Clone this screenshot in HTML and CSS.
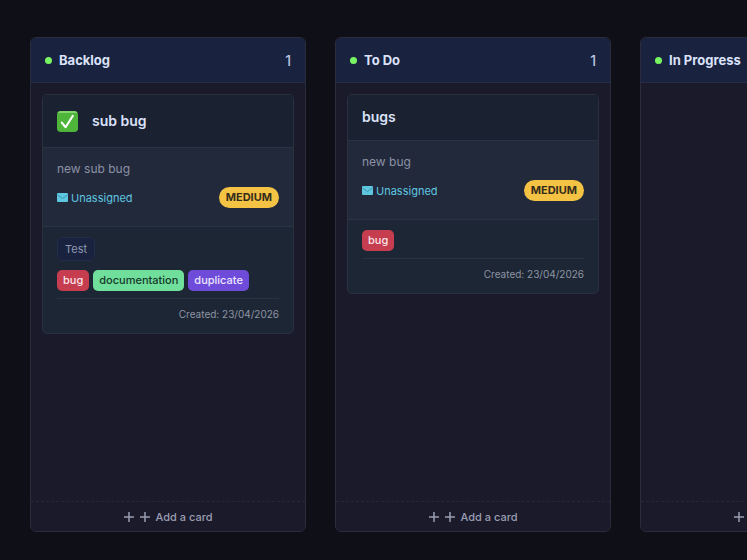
FILE: index.html
```html
<!DOCTYPE html>
<html lang="en">
<head>
    <meta charset="UTF-8">
    <meta name="viewport" content="width=device-width, initial-scale=1.0">
    <title>Board</title>
    <link rel="stylesheet" href="styles.css">
</head>
<body>
    <svg class="sprite" aria-hidden="true">
        <symbol id="icon-mail" viewBox="0 0 22 18">
            <rect width="22" height="18" rx="2" fill="currentColor"/>
            <path d="M1 4l10 7 10-7" fill="none" stroke="#3a93ab" stroke-width="1.8"/>
        </symbol>
        <symbol id="icon-plus" viewBox="0 0 10 10">
            <path d="M5 0v10M0 5h10" fill="none" stroke="currentColor" stroke-width="1.5"/>
        </symbol>
    </svg>
    <main class="board">
        <section class="column">
            <header class="column-header">
                <span class="dot"></span>
                <h2>Backlog</h2>
                <span class="count">1</span>
            </header>
            <div class="column-body">
                <article class="card">
                    <div class="card-header">
                        <svg class="check" viewBox="0 0 22 22" role="img" aria-label="Done">
                            <rect width="22" height="22" rx="4" fill="#4fb53a"/>
                            <path d="M4 0h14a4 4 0 0 1 3.5 2H.5a4 4 0 0 1 3.5-2z" fill="#82d56c"/>
                            <path d="M5 12.2L9 17L16.6 5" fill="none" stroke="#fff" stroke-width="2.2" stroke-linecap="round" stroke-linejoin="round"/>
                        </svg>
                        <h3>sub bug</h3>
                    </div>
                    <div class="card-body">
                        <p>new sub bug</p>
                        <div class="card-meta">
                            <a class="assignee" href="#"><svg class="mail" aria-hidden="true"><use href="#icon-mail"/></svg>Unassigned</a>
                            <span class="priority">MEDIUM</span>
                        </div>
                    </div>
                    <div class="card-footer">
                        <div class="tags">
                            <span class="tag">Test</span>
                        </div>
                        <div class="labels">
                            <span class="label bug">bug</span>
                            <span class="label documentation">documentation</span>
                            <span class="label duplicate">duplicate</span>
                        </div>
                        <p class="created">Created: 23/04/2026</p>
                    </div>
                </article>
            </div>
            <button class="add-card" type="button">
                <svg class="plus" aria-hidden="true"><use href="#icon-plus"/></svg>
                <svg class="plus" aria-hidden="true"><use href="#icon-plus"/></svg>
                Add a card
            </button>
        </section>

        <section class="column">
            <header class="column-header">
                <span class="dot"></span>
                <h2>To Do</h2>
                <span class="count">1</span>
            </header>
            <div class="column-body">
                <article class="card">
                    <div class="card-header">
                        <h3>bugs</h3>
                    </div>
                    <div class="card-body">
                        <p>new bug</p>
                        <div class="card-meta">
                            <a class="assignee" href="#"><svg class="mail" aria-hidden="true"><use href="#icon-mail"/></svg>Unassigned</a>
                            <span class="priority">MEDIUM</span>
                        </div>
                    </div>
                    <div class="card-footer">
                        <div class="labels">
                            <span class="label bug">bug</span>
                        </div>
                        <p class="created">Created: 23/04/2026</p>
                    </div>
                </article>
            </div>
            <button class="add-card" type="button">
                <svg class="plus" aria-hidden="true"><use href="#icon-plus"/></svg>
                <svg class="plus" aria-hidden="true"><use href="#icon-plus"/></svg>
                Add a card
            </button>
        </section>

        <section class="column">
            <header class="column-header">
                <span class="dot"></span>
                <h2>In Progress</h2>
            </header>
            <div class="column-body"></div>
            <button class="add-card" type="button">
                <svg class="plus" aria-hidden="true"><use href="#icon-plus"/></svg>
                <svg class="plus" aria-hidden="true"><use href="#icon-plus"/></svg>
                Add a card
            </button>
        </section>
    </main>
</body>
</html>
```
FILE: styles.css
```css
* {
    box-sizing: border-box;
}
body {
    margin: 0;
    background-color: #0f0f18;
    color: #dbe2fa;
    font-family: Inter, sans-serif;
    font-size: 12px;
}
h2, h3, p {
    margin: 0;
}
.sprite {
    display: none;
}
.board {
    display: flex;
    gap: 29px;
    height: 100vh;
    padding: 37px 30px 28px;
    overflow: hidden;
}
.column {
    display: flex;
    flex-direction: column;
    flex: 0 0 276px;
    background-color: #1b1a2b;
    border: 1px solid #2a2b3b;
    border-radius: 6px;
    overflow: hidden;
}
.column-header {
    display: flex;
    align-items: center;
    gap: 7px;
    height: 45px;
    padding: 0 14px;
    background-color: #19233f;
    border-bottom: 1px solid #252c46;
}
.column-header h2 {
    font-size: 13px;
    font-weight: 700;
}
.dot {
    width: 7px;
    height: 7px;
    border-radius: 50%;
    background-color: #79f563;
}
.count {
    margin-left: auto;
    font-size: 14px;
    font-weight: 500;
    color: #bcc5e0;
}
.column-body {
    flex: 1;
    padding: 11px;
}
.card {
    background-color: #1d2635;
    border: 1px solid #29313f;
    border-radius: 5px;
    overflow: hidden;
}
.card-header {
    display: flex;
    align-items: center;
    gap: 14px;
    padding: 13px 14px 15px;
    background-color: #1a2130;
}
.card-header h3 {
    font-size: 14px;
    font-weight: 600;
    line-height: 17px;
}
.check {
    width: 21px;
    height: 21px;
    margin-top: 3px;
}
.card-body {
    padding: 11px 14px 18px;
    background-color: #22293b;
    border-top: 1px solid #2a3344;
    border-bottom: 1px solid #2a3344;
}
.card-body p {
    font-size: 12px;
    line-height: 20px;
    color: #8c92a5;
}
.card-meta {
    display: flex;
    align-items: center;
    justify-content: space-between;
    margin-top: 8px;
}
.assignee {
    display: flex;
    align-items: center;
    gap: 3px;
    font-size: 11px;
    color: #5fc6e0;
    text-decoration: none;
}
.mail {
    width: 11px;
    height: 9px;
}
.priority {
    padding: 0 7px;
    border-radius: 11px;
    background-color: #f5c344;
    color: #352d1b;
    font-size: 11px;
    font-weight: 700;
    line-height: 21px;
}
.card-footer {
    padding: 10px 14px 11px;
}
.tags, .labels {
    display: flex;
    gap: 4px;
}
.tags {
    margin-bottom: 9px;
}
.tag {
    padding: 0 7px;
    border: 1px solid #222d48;
    border-radius: 5px;
    background-color: #19223f;
    color: #8f98b0;
    font-size: 11px;
    line-height: 22px;
}
.label {
    padding: 0 6px;
    border-radius: 5px;
    font-size: 11px;
    font-weight: 500;
    line-height: 21px;
}
.bug {
    background-color: #c53d4e;
    color: #fbe4ea;
}
.documentation {
    background-color: #6fdf9b;
    color: #17382b;
}
.duplicate {
    background-color: #6f4bda;
    color: #ece6ff;
}
.created {
    margin-top: 7px;
    padding-top: 8px;
    border-top: 1px solid #28333f;
    color: #8e95a3;
    font-size: 10px;
    line-height: 15px;
    text-align: right;
}
.add-card {
    display: flex;
    align-items: center;
    justify-content: center;
    gap: 6px;
    height: 30px;
    padding: 0;
    border: 0;
    border-top: 1px dashed #26273a;
    background-color: #1b1a2b;
    color: #9a9eb2;
    font-family: inherit;
    font-size: 11px;
    font-weight: 500;
}
.plus {
    width: 10px;
    height: 10px;
}
```
